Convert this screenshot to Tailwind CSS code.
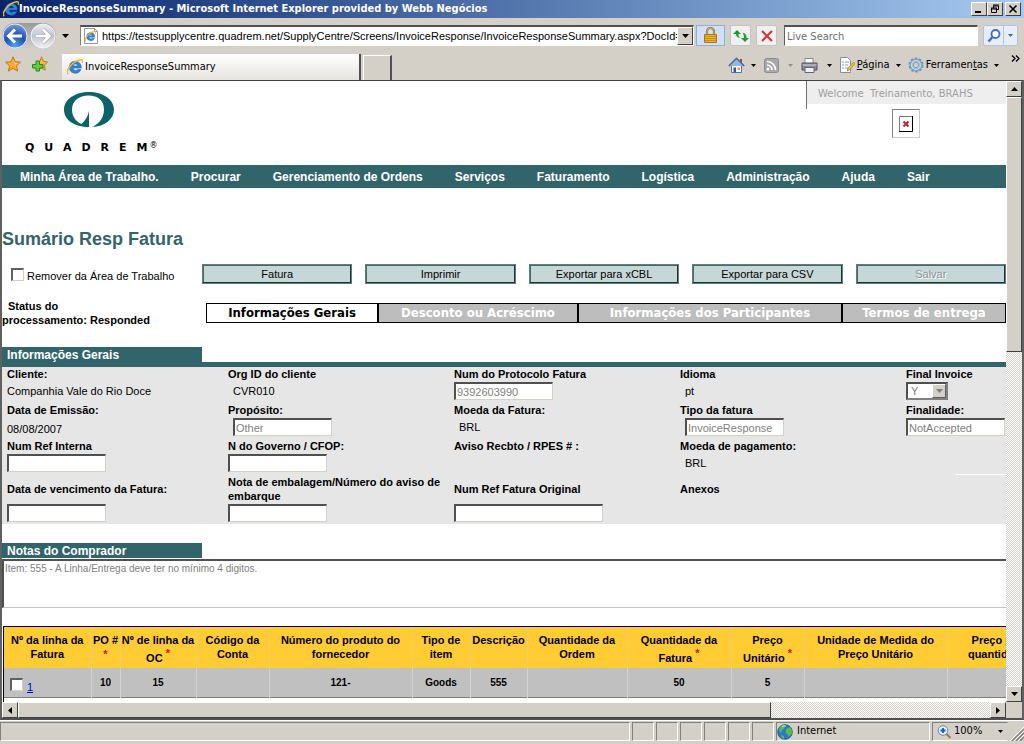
<!DOCTYPE html>
<html lang="pt">
<head>
<meta charset="utf-8">
<title>InvoiceResponseSummary</title>
<script src="https://cdn.jsdelivr.net/npm/@tailwindcss/browser@4"></script>
</head>
<body class="flex h-screen flex-col overflow-hidden bg-[#d4d0c8] font-['DejaVu_Sans_Condensed',Tahoma,sans-serif] text-[11px] text-black">

<svg class="hidden" aria-hidden="true">
  <symbol id="down" viewBox="0 0 7 4"><path d="M0 0h7L3.500 4z" fill="currentColor"/></symbol>
  <symbol id="ie" viewBox="0 0 16 16">
    <path d="M8.300 2.200a6 6 0 1 0 5.600 8.300h-3.400c-1.300 1.600-4.200 1-4.400-1.400h8.200c.3-4-2.300-6.900-6-6.900zM6.100 7c.5-2.600 4.100-2.600 4.500 0z" fill="#2c86dc" stroke="#1156a8" stroke-width=".5"/>
    <path d="M1 15.200C-1.500 12 4.500 2.500 13.500.8c2-.3 2.600.8 1.600 3" fill="none" stroke="#f3b52c" stroke-width="1.500"/>
  </symbol>
</svg>

<header class="shrink-0">
  <div class="flex h-[18px] items-center bg-linear-to-r from-[#0a246a] to-[#a6caf0] pr-[3px] pl-[3px]">
    <svg class="size-4 shrink-0" aria-hidden="true"><use href="#ie"/></svg>
    <h1 class="flex-1 truncate text-[11px] leading-[18px] font-bold text-white">InvoiceResponseSummary - Microsoft Internet Explorer provided by Webb Negócios</h1>
    <button aria-label="Minimizar" class="flex h-[14px] w-4 items-center justify-center border border-t-white border-r-[#404040] border-b-[#404040] border-l-white bg-[#d4d0c8]"><svg class="h-[10px] w-[10px]" viewBox="0 0 10 10"><path d="M1 7h6v2H1z"/></svg></button>
    <button aria-label="Restaurar" class="flex h-[14px] w-4 items-center justify-center border border-t-white border-r-[#404040] border-b-[#404040] border-l-white bg-[#d4d0c8]"><svg class="h-[10px] w-[10px]" viewBox="0 0 10 10" fill="none" stroke="#000"><path d="M3 1h6M3 2h5.500v3.500H7M3.500 2v2M1 4h6M1.500 4v4.500h5V4M1 5h6"/></svg></button>
    <button aria-label="Fechar" class="ml-[2px] flex h-[14px] w-4 items-center justify-center border border-t-white border-r-[#404040] border-b-[#404040] border-l-white bg-[#d4d0c8]"><svg class="h-[10px] w-[10px]" viewBox="0 0 10 10"><path d="M1.500 1.500l7 7m0-7l-7 7" stroke="#000" stroke-width="1.600"/></svg></button>
  </div>

  <div class="flex h-[35px] items-center pl-[2px] pr-[6px]">
    <div class="flex items-center gap-[2px] rounded-full bg-linear-to-b from-[#9a9a9e] to-[#d4d0c8]">
      <button aria-label="Voltar"><svg class="size-[26px]" viewBox="0 0 26 26"><defs><radialGradient id="bk" cx=".5" cy=".9" r=".9"><stop offset="0" stop-color="#4fa4f4"/><stop offset=".5" stop-color="#1c50b0"/><stop offset="1" stop-color="#7b9be0"/></radialGradient></defs><circle cx="13" cy="13" r="12" fill="url(#bk)" stroke="#e8ecf4"/><path d="M13 6.500L6.500 13l6.500 6.500M7 13h13" fill="none" stroke="#fff" stroke-width="3"/></svg></button>
      <button aria-label="Avançar"><svg class="size-[26px]" viewBox="0 0 26 26"><defs><linearGradient id="fw" x2="0" y2="1"><stop offset="0" stop-color="#eceef3"/><stop offset=".5" stop-color="#bfc5d0"/><stop offset="1" stop-color="#eef0f4"/></linearGradient></defs><circle cx="13" cy="13" r="12" fill="url(#fw)" stroke="#f4f4f8"/><path d="M13 6.500l6.500 6.500-6.500 6.500M19 13H6" fill="none" stroke="#a9aeb8" stroke-width="4"/><path d="M13 6.500l6.500 6.500-6.500 6.500M19 13H6" fill="none" stroke="#fff" stroke-width="2.500"/></svg></button>
    </div>
    <button aria-label="Páginas recentes" class="mx-[6px] mr-[11px]"><svg class="h-1 w-[7px]"><use href="#down"/></svg></button>
    <div class="flex h-[21px] min-w-0 flex-1 items-center border border-t-2 border-t-[#505050] border-r-white border-b-white border-l-[#808080] bg-white pl-[2px]">
      <svg class="mr-[3px] size-4 shrink-0" viewBox="0 0 16 16"><path d="M1.500.5h10l3 3v12h-13z" fill="#fff" stroke="#999"/><path d="M11.500.5v3h3" fill="none" stroke="#999"/><use href="#ie" x="2" y="3" width="11" height="11"/></svg>
      <input aria-label="Endereço" type="text" class="h-4 min-w-0 flex-1 bg-transparent font-['Liberation_Sans',Arial,sans-serif] text-[11px]" value="https://testsupplycentre.quadrem.net/SupplyCentre/Screens/InvoiceResponse/InvoiceResponseSummary.aspx?DocId=">
      <button aria-label="Mostrar endereços" class="flex h-[18px] w-4 items-center justify-center border border-t-white border-r-[#404040] border-b-[#404040] border-l-white bg-[#d4d0c8]"><svg class="h-1 w-[7px]"><use href="#down"/></svg></button>
    </div>
    <button aria-label="Relatório de segurança" class="ml-[2px] flex h-[21px] w-[29px] items-center justify-center border border-[#8ab0e0] bg-[#cfe0f8]"><svg class="size-[17px]" viewBox="0 0 17 17"><path d="M5 8V4.500a3.500 3.500 0 0 1 7 0V8" fill="none" stroke="#8c7430" stroke-width="2.200"/><path d="M5 8V4.500a3.500 3.500 0 0 1 7 0V8" fill="none" stroke="#d8c890" stroke-width=".8"/><path d="M2.500 7.500h12v8h-12z" fill="#f0b428" stroke="#a87810"/><path d="M3 9.500h11M3 11.500h11M3 13.500h11" stroke="#c88c18"/></svg></button>
    <button aria-label="Atualizar" class="ml-[5px] flex h-[21px] w-[21px] items-center justify-center rounded-[2px] border border-[#c4c4c8] bg-[#f0f0f0]"><svg class="size-4" viewBox="0 0 16 16" fill="#1f9a2c"><path d="M0 6l4-4 4 4H5.500c0 2 .5 3 1.500 4C4 9.500 3 8 3 6z"/><path d="M8 10l4 4 4-4h-2.500c0-3-1-4.500-4-5.500 1.200 1.500 1.500 3 1.500 5.500z"/></svg></button>
    <button aria-label="Parar" class="ml-[5px] flex h-[21px] w-[21px] items-center justify-center rounded-[2px] border border-[#c4c4c8] bg-[#f0f0f0]"><svg class="size-[14px]" viewBox="0 0 14 14"><path d="M2 2l10 10M12 2L2 12" stroke="#c83c3c" stroke-width="2.200"/></svg></button>
    <input aria-label="Live Search" type="text" placeholder="Live Search" class="ml-[7px] h-[21px] w-[194px] border border-t-2 border-t-[#505050] border-r-white border-b-white border-l-[#606060] bg-white pl-[2px] text-[11px] placeholder:text-[#6e6e6e]">
    <div class="ml-[5px] flex h-[21px] rounded-[2px] border border-[#b4c4dc] bg-[#e8eef8]">
      <button aria-label="Pesquisar" class="flex w-[20px] items-center justify-center border-r border-[#b4c4dc]"><svg class="size-[14px]" viewBox="0 0 14 14"><circle cx="8.500" cy="5" r="4" fill="#fff" stroke="#3a6cd0" stroke-width="1.800"/><path d="M5.500 8L1.500 12.500" stroke="#3a6cd0" stroke-width="2.400"/></svg></button>
      <button aria-label="Opções de pesquisa" class="flex w-[13px] items-center justify-center text-[#2c6cb8]"><svg class="h-[3px] w-[5px]"><use href="#down"/></svg></button>
    </div>
  </div>

  <div class="flex h-[27px] items-stretch">
    <div class="flex w-[62px] items-start gap-[11px] pt-[3px] pl-[5px]">
      <button aria-label="Favoritos"><svg class="size-4" viewBox="0 0 16 16"><path d="M8 .8l2.200 4.900 5.200.5-3.900 3.600 1.100 5.300L8 12.400l-4.600 2.700 1.100-5.300L.6 6.200l5.200-.5z" fill="#fba928" stroke="#c07c14"/><path d="M8 3.500l1.300 3 3 .4-2.300 2z" fill="#fde08c"/></svg></button>
      <button aria-label="Adicionar a favoritos"><svg class="size-4" viewBox="0 0 16 16"><path d="M9.500.8l2 4.600 4 .5-3 3.300.8 5L9.500 12 6 14l.8-5L4 6l4-.6z" fill="#fbb83c" stroke="#c07c14"/><path d="M4 5h3.500v3.500H11V12H7.500v3H4v-3H.5V8.500H4z" fill="#6cc840" stroke="#208a20"/></svg></button>
    </div>
    <div class="mt-[1px] flex w-[299px] items-center gap-[2px] border-r-2 border-[#505050] bg-linear-to-b from-white to-[#e6e4de] pl-[5px]">
      <svg class="size-4" aria-hidden="true"><use href="#ie"/></svg><span>InvoiceResponseSummary</span>
    </div>
    <button aria-label="Nova guia" class="mt-[2px] ml-[2px] w-[29px] border-2 border-t-1 border-b-0 border-l-1 border-t-white border-r-[#505050] border-l-white"></button>
    <div class="flex min-w-0 flex-1 items-center justify-end pb-[3px] pr-[4px]">
      <button aria-label="Início"><svg class="size-[17px]" viewBox="0 0 17 17"><path d="M12 2h2v4h-2z" fill="#b04030"/><path d="M3.500 8h10v7.500h-10z" fill="#f4f6fc" stroke="#5870a0"/><path d="M.8 9L8.500 1.200 16.200 9" fill="#9cb4e0" stroke="#4a64a4" stroke-width="1.500"/><path d="M5.500 10.500h2.500v5H5.500z" fill="#3458a0"/><path d="M9.500 10.500h2.500v2.500H9.500z" fill="#e8a040"/></svg></button>
      <svg class="ml-[6px] h-[3px] w-[5px]"><use href="#down"/></svg>
      <button aria-label="Feeds" class="ml-[8px]"><svg class="size-[15px]" viewBox="0 0 15 15"><rect x=".5" y=".5" width="14" height="14" rx="2" fill="#a8a8a8" stroke="#8c8c8c"/><circle cx="4" cy="11" r="1.500" fill="#fff"/><path d="M3 7a5 5 0 0 1 5 5M3 3.500A8.500 8.500 0 0 1 11.500 12" fill="none" stroke="#fff" stroke-width="1.600"/></svg></button>
      <svg class="ml-[9px] h-[3px] w-[5px] text-[#909090]"><use href="#down"/></svg>
      <button aria-label="Imprimir página" class="ml-[8px]"><svg class="size-[17px]" viewBox="0 0 17 17"><path d="M4 1.500h8V7H4z" fill="#fff" stroke="#888"/><path d="M1 6h15v7H1z" fill="#8c8c94" stroke="#505058"/><path d="M1.500 8h14" stroke="#d0d0d4"/><path d="M4 10.500h9v5H4z" fill="#e8f0fc" stroke="#666"/></svg></button>
      <svg class="ml-[9px] h-[3px] w-[5px]"><use href="#down"/></svg>
      <button class="ml-[7px] flex items-center gap-[2px]"><svg class="size-[16px]" viewBox="0 0 16 16"><path d="M1.500.5h7l3 3v12h-10z" fill="#fff" stroke="#8090a8"/><path d="M3 5h2m1 0h4M3 8h2m1 0h3M3 11h2m1 0h3" stroke="#7c9cc8"/><path d="M14.500 5L9 11l-1 3 3-1.500L16 6.500z" fill="#f0b848" stroke="#b07c20" stroke-width=".7"/></svg><span><u>P</u>ágina</span></button>
      <svg class="ml-[6px] h-[3px] w-[5px]"><use href="#down"/></svg>
      <button class="ml-[7px] flex items-center gap-[2px]"><svg class="size-[16px]" viewBox="0 0 16 16"><circle cx="8" cy="8" r="6.500" fill="none" stroke="#6c94b8" stroke-width="2" stroke-dasharray="2.600 1.480"/><circle cx="8" cy="8" r="4.800" fill="none" stroke="#7ca4c4" stroke-width="3"/><circle cx="8" cy="8" r="4.400" fill="none" stroke="#c4dcec" stroke-width="1.400"/><circle cx="8" cy="8" r="2.600" fill="#d4d0c8" stroke="#6c94b8" stroke-width=".8"/></svg><span>Ferramen<u>t</u>as</span></button>
      <svg class="ml-[6px] h-[3px] w-[5px]"><use href="#down"/></svg>
      <button aria-label="Mais comandos" class="ml-[12px] self-start pt-[2px]"><svg class="h-[7px] w-[9px]" viewBox="0 0 9 7" fill="none" stroke="#000" stroke-width="1.300"><path d="M1 .5l3 3-3 3M5 .5l3 3-3 3"/></svg></button>
    </div>
  </div>
</header>

<div class="grid min-h-0 flex-1 grid-cols-[minmax(0,1fr)_16px] grid-rows-[minmax(0,1fr)_16px] border-t border-r-2 border-b-2 border-l-2 border-t-[#404040] border-r-[#606060] border-b-[#505050] border-l-[#606060]">
  <main class="overflow-hidden bg-white font-['Liberation_Sans',Arial,sans-serif]">
    <div class="flex h-[84px] justify-between">
      <div class="pt-[10px] pl-[23px]">
        <svg class="ml-[38px] h-[37px] w-[52px]" viewBox="0 0 52 37" fill="#0c6468"><path d="M29 36c4-1.500 12-7 12-17.500C41 9.500 35 4.500 25.500 4.500S9 10 9 18.500c0 6.500 3.500 12 9.500 14.500 3.800-3.500 6.500-7.500 7.500-13V36C11.500 36 1 29 1 18.500 1 8.500 12 1 26 1s25 7.500 25 17.500C51 28 42 35.500 29 36z"/></svg>
        <div class="mt-[13px] flex items-start font-['DejaVu_Sans',Verdana,sans-serif] leading-[14px]"><span class="text-[11px] font-bold tracking-[10px]">QUADRE<span class="tracking-normal">M</span></span><span class="ml-[2px] text-[8px] leading-[10px]">®</span></div>
      </div>
      <div class="flex w-[200px] items-start">
        <div class="h-[28px] w-px bg-[#707070]"></div>
        <div class="flex-1">
          <p class="h-[23px] bg-[#eeeeee] pl-[11px] font-['DejaVu_Sans',Verdana,sans-serif] text-[10px] leading-[25px] whitespace-pre text-[#a0a0a0]">Welcome  Treinamento, BRAHS</p>
          <div class="mt-[5px] ml-[85px] flex h-[29px] w-[28px] items-center justify-center border border-t-[#808080] border-r-[#c8c8c8] border-b-[#c8c8c8] border-l-[#808080]">
            <svg class="h-4 w-[14px]" viewBox="0 0 14 16" role="img" aria-label="Imagem indisponível"><path d="M.5.500h13v15H.5z" fill="#fff" stroke="#777"/><path d="M13.500 0v15.500H0" fill="none" stroke="#000"/><path d="M4.500 5.500l5 5m0-5l-5 5" stroke="#d01830" stroke-width="1.800"/></svg>
          </div>
        </div>
      </div>
    </div>

    <nav class="flex h-[23px] items-center gap-[32px] overflow-hidden bg-[#32656a] pl-[18px] text-xs font-bold whitespace-nowrap text-white">
      <a href="#">Minha Área de Trabalho.</a><a href="#">Procurar</a><a href="#">Gerenciamento de Ordens</a><a href="#">Serviços</a><a href="#">Faturamento</a><a href="#">Logística</a><a href="#">Administração</a><a href="#">Ajuda</a><a href="#">Sair</a>
    </nav>

    <h2 class="mt-[40px] text-lg leading-[22px] font-bold text-[#32656a]">Sumário Resp Fatura</h2>

    <div class="mt-[14px] flex h-[20px]">
      <label class="flex w-[200px] items-start gap-[3px] pt-[4px] pl-[9px]"><input type="checkbox" class="size-[13px] appearance-none border border-t-2 border-l-2 border-t-[#606060] border-r-[#d4d0c8] border-b-[#d4d0c8] border-l-[#606060] bg-white"><span class="leading-4">Remover da Área de Trabalho</span></label>
      <div class="grid flex-1 grid-cols-5 gap-[13px] leading-4">
        <button class="h-[20px] border border-[#5c807c] bg-[#c6d7d7] shadow-[inset_-1px_-1px_#1c3434,inset_1px_1px_#4c6864]">Fatura</button>
        <button class="h-[20px] border border-[#5c807c] bg-[#c6d7d7] shadow-[inset_-1px_-1px_#1c3434,inset_1px_1px_#4c6864]">Imprimir</button>
        <button class="h-[20px] border border-[#5c807c] bg-[#c6d7d7] shadow-[inset_-1px_-1px_#1c3434,inset_1px_1px_#4c6864]">Exportar para xCBL</button>
        <button class="h-[20px] border border-[#5c807c] bg-[#c6d7d7] shadow-[inset_-1px_-1px_#1c3434,inset_1px_1px_#4c6864]">Exportar para CSV</button>
        <button disabled class="h-[20px] border border-[#5c807c] bg-[#c6d7d7] text-[#8c9696] shadow-[inset_-1px_-1px_#1c3434,inset_1px_1px_#4c6864] [text-shadow:1px_1px_0_#fff]">Salvar</button>
      </div>
    </div>

    <div class="mt-[15px] flex h-[33px] items-start">
      <p class="w-[204px] text-[11px] leading-[14px] font-bold"><span class="ml-[6px]">Status do</span><br>processamento: Responded</p>
      <div class="mt-[4px] grid h-[20px] flex-1 grid-cols-[170fr_200fr_264fr_164fr] grid-rows-[18px] border border-black bg-[#bdbdbd] font-['DejaVu_Sans_Condensed',Verdana,sans-serif] text-[13px] leading-[18px] font-bold text-white">
        <button class="bg-white text-black">Informações Gerais</button>
        <button class="border-l-2 border-black">Desconto ou Acréscimo</button>
        <button class="border-l-2 border-black">Informações dos Participantes</button>
        <button class="border-l-2 border-black">Termos de entrega</button>
      </div>
    </div>

    <section class="mt-[15px]">
      <h3 class="h-[15px] w-[200px] bg-[#32656a] pl-[5px] text-xs leading-[16px] font-bold text-white">Informações Gerais</h3>
      <div class="h-[5px] bg-[#32656a]"></div>
      <div class="grid grid-cols-[repeat(4,226fr)_100fr] grid-rows-[15px_21px_15px_21px_15px_21px_29px_20px] bg-[#e6e6e6] leading-[15px]">
        <b class="pl-[5px]">Cliente:</b><b>Org ID do cliente</b><label for="prot" class="font-bold">Num do Protocolo Fatura</label><b>Idioma</b><label for="fin" class="font-bold whitespace-nowrap">Final Invoice</label>
        <span class="pt-[2px] pl-[5px]">Companhia Vale do Rio Doce</span><span class="pt-[2px] pl-[5px]">CVR010</span>
        <input id="prot" disabled value="9392603990" class="h-[18px] w-[99px] border border-t-2 border-l-2 border-t-[#505050] border-r-[#d4d0c8] border-b-[#d4d0c8] border-l-[#505050] bg-white px-px text-[11px] text-[#808080]">
        <span class="pt-[2px] pl-[5px]">pt</span>
        <div class="relative h-[18px] w-[42px]"><select id="fin" disabled class="size-full appearance-none border-2 border-t-[#505050] border-r-[#808080] border-b-[#808080] border-l-[#505050] bg-white px-[3px] text-[11px] text-[#808080] opacity-100"><option>Y</option></select><span class="pointer-events-none absolute inset-y-[2px] right-[2px] flex w-[14px] items-center justify-center border border-t-white border-r-[#606060] border-b-[#606060] border-l-white bg-[#d4d0c8] text-[#808080]"><svg class="h-1 w-[7px]"><use href="#down"/></svg></span></div>

        <b class="pl-[5px]">Data de Emissão:</b><label for="prop" class="font-bold">Propósito:</label><b>Moeda da Fatura:</b><label for="tipo" class="font-bold">Tipo da fatura</label><label for="final" class="font-bold">Finalidade:</label>
        <span class="pt-[4px] pl-[5px]">08/08/2007</span>
        <input id="prop" disabled value="Other" class="ml-[5px] h-[18px] w-[99px] border border-t-2 border-l-2 border-t-[#505050] border-r-[#d4d0c8] border-b-[#d4d0c8] border-l-[#505050] bg-white px-px text-[11px] text-[#808080]">
        <span class="pt-[2px] pl-[5px]">BRL</span>
        <input id="tipo" disabled value="InvoiceResponse" class="ml-[5px] h-[18px] w-[99px] border border-t-2 border-l-2 border-t-[#505050] border-r-[#d4d0c8] border-b-[#d4d0c8] border-l-[#505050] bg-white px-px text-[11px] text-[#808080]">
        <input id="final" disabled value="NotAccepted" class="h-[18px] w-[99px] border border-t-2 border-l-2 border-t-[#505050] border-r-[#d4d0c8] border-b-[#d4d0c8] border-l-[#505050] bg-white px-px text-[11px] text-[#808080]">

        <label for="ref" class="pl-[5px] font-bold">Num Ref Interna</label><label for="cfop" class="font-bold">N do Governo / CFOP:</label><b>Aviso Recbto / RPES # :</b><b>Moeda de pagamento:</b><span></span>
        <input id="ref" class="ml-[5px] h-[18px] w-[99px] border border-t-2 border-l-2 border-t-[#505050] border-r-[#d4d0c8] border-b-[#d4d0c8] border-l-[#505050] bg-white px-px text-[11px]">
        <input id="cfop" class="h-[18px] w-[99px] border border-t-2 border-l-2 border-t-[#505050] border-r-[#d4d0c8] border-b-[#d4d0c8] border-l-[#505050] bg-white px-px text-[11px]">
        <span></span><span class="pt-[2px] pl-[5px]">BRL</span><span class="ml-auto w-1/2 border-b border-white"></span>

        <label for="venc" class="self-center pl-[5px] font-bold">Data de vencimento da Fatura:</label><label for="nota" class="leading-[14px] font-bold">Nota de embalagem/Número do aviso de embarque</label><label for="orig" class="self-center font-bold">Num Ref Fatura Original</label><b class="self-center">Anexos</b><span></span>
        <input id="venc" class="ml-[5px] h-[18px] w-[99px] border border-t-2 border-l-2 border-t-[#505050] border-r-[#d4d0c8] border-b-[#d4d0c8] border-l-[#505050] bg-white px-px text-[11px]">
        <input id="nota" class="h-[18px] w-[99px] border border-t-2 border-l-2 border-t-[#505050] border-r-[#d4d0c8] border-b-[#d4d0c8] border-l-[#505050] bg-white px-px text-[11px]">
        <input id="orig" class="h-[18px] w-[149px] border border-t-2 border-l-2 border-t-[#505050] border-r-[#d4d0c8] border-b-[#d4d0c8] border-l-[#505050] bg-white px-px text-[11px]">
      </div>
    </section>

    <section class="mt-[19px]">
      <h3 class="h-[15px] w-[200px] bg-[#32656a] pl-[5px] text-xs leading-[16px] font-bold text-white"><label for="notas">Notas do Comprador</label></h3>
      <textarea id="notas" disabled class="mt-[1px] block h-[49px] w-full resize-none border-t-2 border-b border-l-2 border-t-[#505050] border-b-[#c4c4c4] border-l-[#505050] bg-white px-px pt-px text-[10px] leading-[13px] text-[#808080]">Item: 555 - A Linha/Entrega deve ter no mínimo 4 digitos.</textarea>
    </section>

    <div class="mt-[18px] ml-[1px] h-[76px] border-t border-l border-black">
      <table class="w-[1043px] table-fixed border-collapse text-center font-bold">
        <colgroup><col class="w-[87px]"><col class="w-[29px]"><col class="w-[76px]"><col class="w-[73px]"><col class="w-[143px]"><col class="w-[58px]"><col class="w-[57px]"><col class="w-[100px]"><col class="w-[104px]"><col class="w-[73px]"><col class="w-[143px]"><col class="w-[100px]"></colgroup>
        <thead class="bg-[#ffcc33] align-top leading-[14px]">
          <tr class="h-[41px] divide-x divide-[#ecd070] *:px-0 *:pt-[6px]">
            <th>Nº da linha da Fatura</th>
            <th>PO #<br><span class="text-red-600">*</span></th>
            <th class="whitespace-nowrap">Nº de linha da<span class="block pt-[4px]">OC <sup class="text-[11px] text-red-600">*</sup></span></th>
            <th>Código da<br>Conta</th>
            <th>Número do produto do<br>fornecedor</th>
            <th>Tipo de<br>item</th>
            <th>Descrição</th>
            <th>Quantidade da<br>Ordem</th>
            <th>Quantidade da<span class="block pt-[4px]">Fatura <sup class="text-[11px] text-red-600">*</sup></span></th>
            <th>Preço<span class="block pt-[4px]">Unitário <sup class="text-[11px] text-red-600">*</sup></span></th>
            <th>Unidade de Medida do<br>Preço Unitário</th>
            <th>Preço por<br>quantidade</th>
          </tr>
        </thead>
        <tbody class="text-[10px]">
          <tr class="h-[29px] divide-x divide-[#d4d4d4] border-b border-[#808080] bg-[#c0c0c0]">
            <td><div class="flex items-center gap-[4px] pt-[5px] pl-[6px] text-[11px] font-normal"><input type="checkbox" aria-label="Selecionar linha 1" class="size-[13px] appearance-none border border-t-2 border-l-2 border-t-[#606060] border-r-[#d4d0c8] border-b-[#d4d0c8] border-l-[#606060] bg-white"><a href="#" class="pt-[4px] text-[#0000dd] underline">1</a></div></td>
            <td>10</td><td>15</td><td></td><td>121-</td><td>Goods</td><td>555</td><td></td><td>50</td><td>5</td><td></td><td></td>
          </tr>
        </tbody>
      </table>
    </div>
  </main>

  <div class="flex flex-col bg-[repeating-conic-gradient(#fff_0_25%,#d4d0c8_0_50%)] bg-[length:2px_2px]">
    <button aria-label="Rolar para cima" class="flex size-4 shrink-0 items-center justify-center border border-t-white border-r-[#404040] border-b-[#404040] border-l-white bg-[#d4d0c8]"><svg class="h-1 w-[7px] rotate-180"><use href="#down"/></svg></button>
    <div class="h-[41%] border border-t-white border-r-[#404040] border-b-[#404040] border-l-white bg-[#d4d0c8]"></div>
    <button aria-label="Rolar para baixo" class="mt-auto flex size-4 shrink-0 items-center justify-center border border-t-white border-r-[#404040] border-b-[#404040] border-l-white bg-[#d4d0c8]"><svg class="h-1 w-[7px]"><use href="#down"/></svg></button>
  </div>
  <div class="flex bg-[repeating-conic-gradient(#fff_0_25%,#d4d0c8_0_50%)] bg-[length:2px_2px]">
    <button aria-label="Rolar para a esquerda" class="flex size-4 shrink-0 items-center justify-center border border-t-white border-r-[#404040] border-b-[#404040] border-l-white bg-[#d4d0c8]"><svg class="h-[7px] w-1" viewBox="0 0 4 7"><path d="M4 0v7L0 3.500z"/></svg></button>
    <div class="w-[75%] border border-t-white border-r-[#404040] border-b-[#404040] border-l-white bg-[#d4d0c8]"></div>
    <button aria-label="Rolar para a direita" class="ml-auto flex size-4 shrink-0 items-center justify-center border border-t-white border-r-[#404040] border-b-[#404040] border-l-white bg-[#d4d0c8]"><svg class="h-[7px] w-1" viewBox="0 0 4 7"><path d="M0 0v7l4-3.500z"/></svg></button>
  </div>
  <div class="bg-[#d4d0c8]"></div>
</div>

<footer class="flex h-[24px] shrink-0 items-stretch gap-[2px] border-t border-white pt-[1px] pb-[3px]">
  <div class="flex-1 border border-t-[#808080] border-r-white border-b-white border-l-[#808080]"></div>
  <div class="w-[22px] border border-t-[#808080] border-r-white border-b-white border-l-[#808080]"></div>
  <div class="w-[22px] border border-t-[#808080] border-r-white border-b-white border-l-[#808080]"></div>
  <div class="w-[22px] border border-t-[#808080] border-r-white border-b-white border-l-[#808080]"></div>
  <div class="w-[22px] border border-t-[#808080] border-r-white border-b-white border-l-[#808080]"></div>
  <div class="w-[22px] border border-t-[#808080] border-r-white border-b-white border-l-[#808080]"></div>
  <div class="w-[22px] border border-t-[#808080] border-r-white border-b-white border-l-[#808080]"></div>
  <div class="flex w-[154px] items-center gap-[4px] border border-t-[#808080] border-r-white border-b-white border-l-[#808080]">
    <svg class="size-4" viewBox="0 0 16 16"><circle cx="8" cy="8" r="7.300" fill="#2a78d0" stroke="#1c4c8c" stroke-width=".8"/><path d="M3 3c2-2 4-2 5-1l-1 3-2 1-1 3-2-2zM9 5l4-2c2 2 2.500 5 1.500 7l-3 3-1-3-2-1zM4 11l3 1v3c-2-.5-3-2-3-4z" fill="#5cbc48"/><path d="M5 2.500a6 6 0 0 1 4-.5" stroke="#d4ecfc" fill="none"/></svg><span>Internet</span>
  </div>
  <button class="flex w-[76px] items-center border border-t-[#808080] border-r-transparent border-b-white border-l-[#808080] pr-[4px] pl-[4px]">
    <svg class="mr-[3px] size-[14px]" viewBox="0 0 14 14"><circle cx="6" cy="5.500" r="4.800" fill="#e4f0fc" stroke="#5888c8"/><path d="M3.500 5.500h5M6 3v5" stroke="#1c58b4" stroke-width="1.800"/><path d="M9.500 9l4 4" stroke="#a87840" stroke-width="2"/></svg>100%<svg class="ml-auto h-[3px] w-[5px]"><use href="#down"/></svg>
  </button>
  <svg class="w-[14px] self-end" height="14" viewBox="0 0 14 14"><path d="M2 14L14 2M6 14l8-8M10 14l4-4" stroke="#808080" stroke-width="1.500"/><path d="M0 14L14 0M4 14L14 4M8 14l6-6" stroke="#fff"/></svg>
</footer>
</body>
</html>
